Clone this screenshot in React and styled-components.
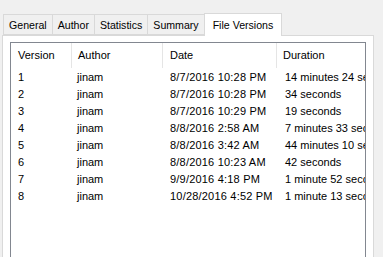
import React from "react";
import styled, { createGlobalStyle } from "styled-components";

const Global = createGlobalStyle`
  html, body {
    margin: 0;
    padding: 0;
    background: #f0f0f0;
    width: 383px;
    height: 257px;
    overflow: hidden;
  }
  * { box-sizing: border-box; }
`;

const Window = styled.div`
  width: 383px;
  height: 257px;
  padding: 12px 9px 0 2px;
  font-family: "Liberation Sans", Arial, sans-serif;
  font-size: 11px;
  color: #000;
  display: flex;
  flex-direction: column;
`;

const TabStrip = styled.div`
  display: flex;
  align-items: flex-end;
  height: 23px;
  padding-left: 2px;
  position: relative;
  z-index: 1;
`;

const Tab = styled.div`
  height: ${(p) => (p.active ? "23px" : "21px")};
  padding: 0 ${(p) => (p.active ? "8px" : "5px")};
  padding-top: ${(p) => (p.active ? "0" : "1px")};
  margin-bottom: ${(p) => (p.active ? "-1px" : "0")};
  margin-left: -1px;
  background: ${(p) => (p.active ? "#fff" : "#f0f0f0")};
  border: 1px solid #d9d9d9;
  border-bottom: ${(p) => (p.active ? "none" : "1px solid #d9d9d9")};
  display: flex;
  align-items: center;
  white-space: nowrap;
  line-height: 1;
  font-size: 10.6px;
`;

const Panel = styled.div`
  flex: 1;
  background: #fff;
  border: 1px solid #d9d9d9;
  border-bottom: none;
  padding: 6px 7px 0 7px;
  display: flex;
  min-height: 0;
`;

const ListBox = styled.div`
  flex: 1;
  border: 1px solid #828790;
  border-bottom: none;
  background: #fff;
  overflow: hidden;
`;

const Grid = styled.div`
  display: grid;
  grid-template-columns: 61px 91px 114px 1fr;
`;

const HeadCell = styled.div`
  height: 25px;
  display: flex;
  align-items: center;
  padding-left: ${(p) => p.inset || 6}px;
  padding-bottom: 1px;
  border-right: ${(p) => (p.last ? "none" : "1px solid #e5e5e5")};
  white-space: nowrap;
`;

const Cell = styled.div`
  height: 17px;
  display: flex;
  align-items: center;
  padding-left: ${(p) => p.inset || 6}px;
  white-space: nowrap;
  overflow: hidden;
  letter-spacing: ${(p) => p.spacing || 0}px;
`;

const tabs = ["General", "Author", "Statistics", "Summary", "File Versions"];

const rows = [
  ["1", "jinam", "8/7/2016 10:28 PM", "14 minutes 24 seconds"],
  ["2", "jinam", "8/7/2016 10:28 PM", "34 seconds"],
  ["3", "jinam", "8/7/2016 10:29 PM", "19 seconds"],
  ["4", "jinam", "8/8/2016 2:58 AM", "7 minutes 33 seconds"],
  ["5", "jinam", "8/8/2016 3:42 AM", "44 minutes 10 seconds"],
  ["6", "jinam", "8/8/2016 10:23 AM", "42 seconds"],
  ["7", "jinam", "9/9/2016 4:18 PM", "1 minute 52 seconds"],
  ["8", "jinam", "10/28/2016 4:52 PM", "1 minute 13 seconds"],
];

export default function App() {
  return (
    <>
      <Global />
      <Window>
        <TabStrip>
          {tabs.map((t) => (
            <Tab key={t} active={t === "File Versions"}>
              {t}
            </Tab>
          ))}
        </TabStrip>
        <Panel>
          <ListBox>
            <Grid>
              <HeadCell inset={7}>Version</HeadCell>
              <HeadCell inset={6}>Author</HeadCell>
              <HeadCell inset={7}>Date</HeadCell>
              <HeadCell inset={6} last>Duration</HeadCell>
              {rows.map((r) => (
                <React.Fragment key={r[0]}>
                  <Cell inset={7}>{r[0]}</Cell>
                  <Cell inset={5}>{r[1]}</Cell>
                  <Cell inset={7} spacing={0.2}>{r[2]}</Cell>
                  <Cell inset={8}>{r[3]}</Cell>
                </React.Fragment>
              ))}
            </Grid>
          </ListBox>
        </Panel>
      </Window>
    </>
  );
}
